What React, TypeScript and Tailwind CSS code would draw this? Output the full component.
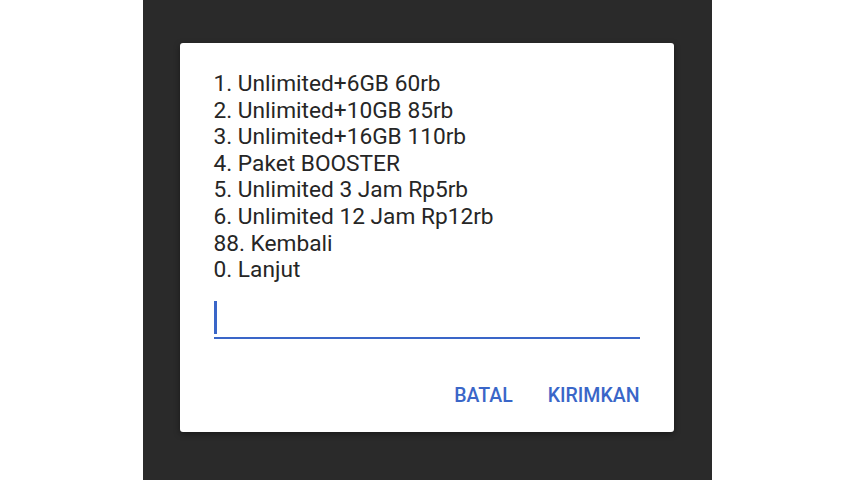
import React from "react";

const items = [
  "1. Unlimited+6GB 60rb",
  "2. Unlimited+10GB 85rb",
  "3. Unlimited+16GB 110rb",
  "4. Paket BOOSTER",
  "5. Unlimited 3 Jam Rp5rb",
  "6. Unlimited 12 Jam Rp12rb",
  "88. Kembali",
  "0. Lanjut",
];

export default function App() {
  return (
    <div
      className="w-[854px] h-[480px] bg-white flex justify-center overflow-hidden"
      style={{ fontFamily: "Roboto, 'Noto Sans', sans-serif" }}
    >
      <div className="w-[569px] h-full bg-[#2a2a2a] pt-[43px] pl-[37px]">
        <div className="w-[494px] h-[389px] bg-white rounded-[3px] shadow-[0_2px_6px_rgba(0,0,0,0.4)] pl-[34px] pr-[34px] pt-[28px]">
          <div className="text-[22.7px] leading-[26.6px] text-[#262626]">
            {items.map((t) => (
              <div key={t}>{t}</div>
            ))}
          </div>
          <div className="mt-[15px] h-[40px] border-b-2 border-[#3a66c8] flex items-start pt-[2px]">
            <div className="w-[3px] h-[33px] bg-[#3a66c8]" />
          </div>
          <div className="mt-[45px] flex justify-end gap-[35px] text-[19.5px] leading-[24px] font-medium text-[#3a66c8]">
            <span>BATAL</span>
            <span>KIRIMKAN</span>
          </div>
        </div>
      </div>
    </div>
  );
}
